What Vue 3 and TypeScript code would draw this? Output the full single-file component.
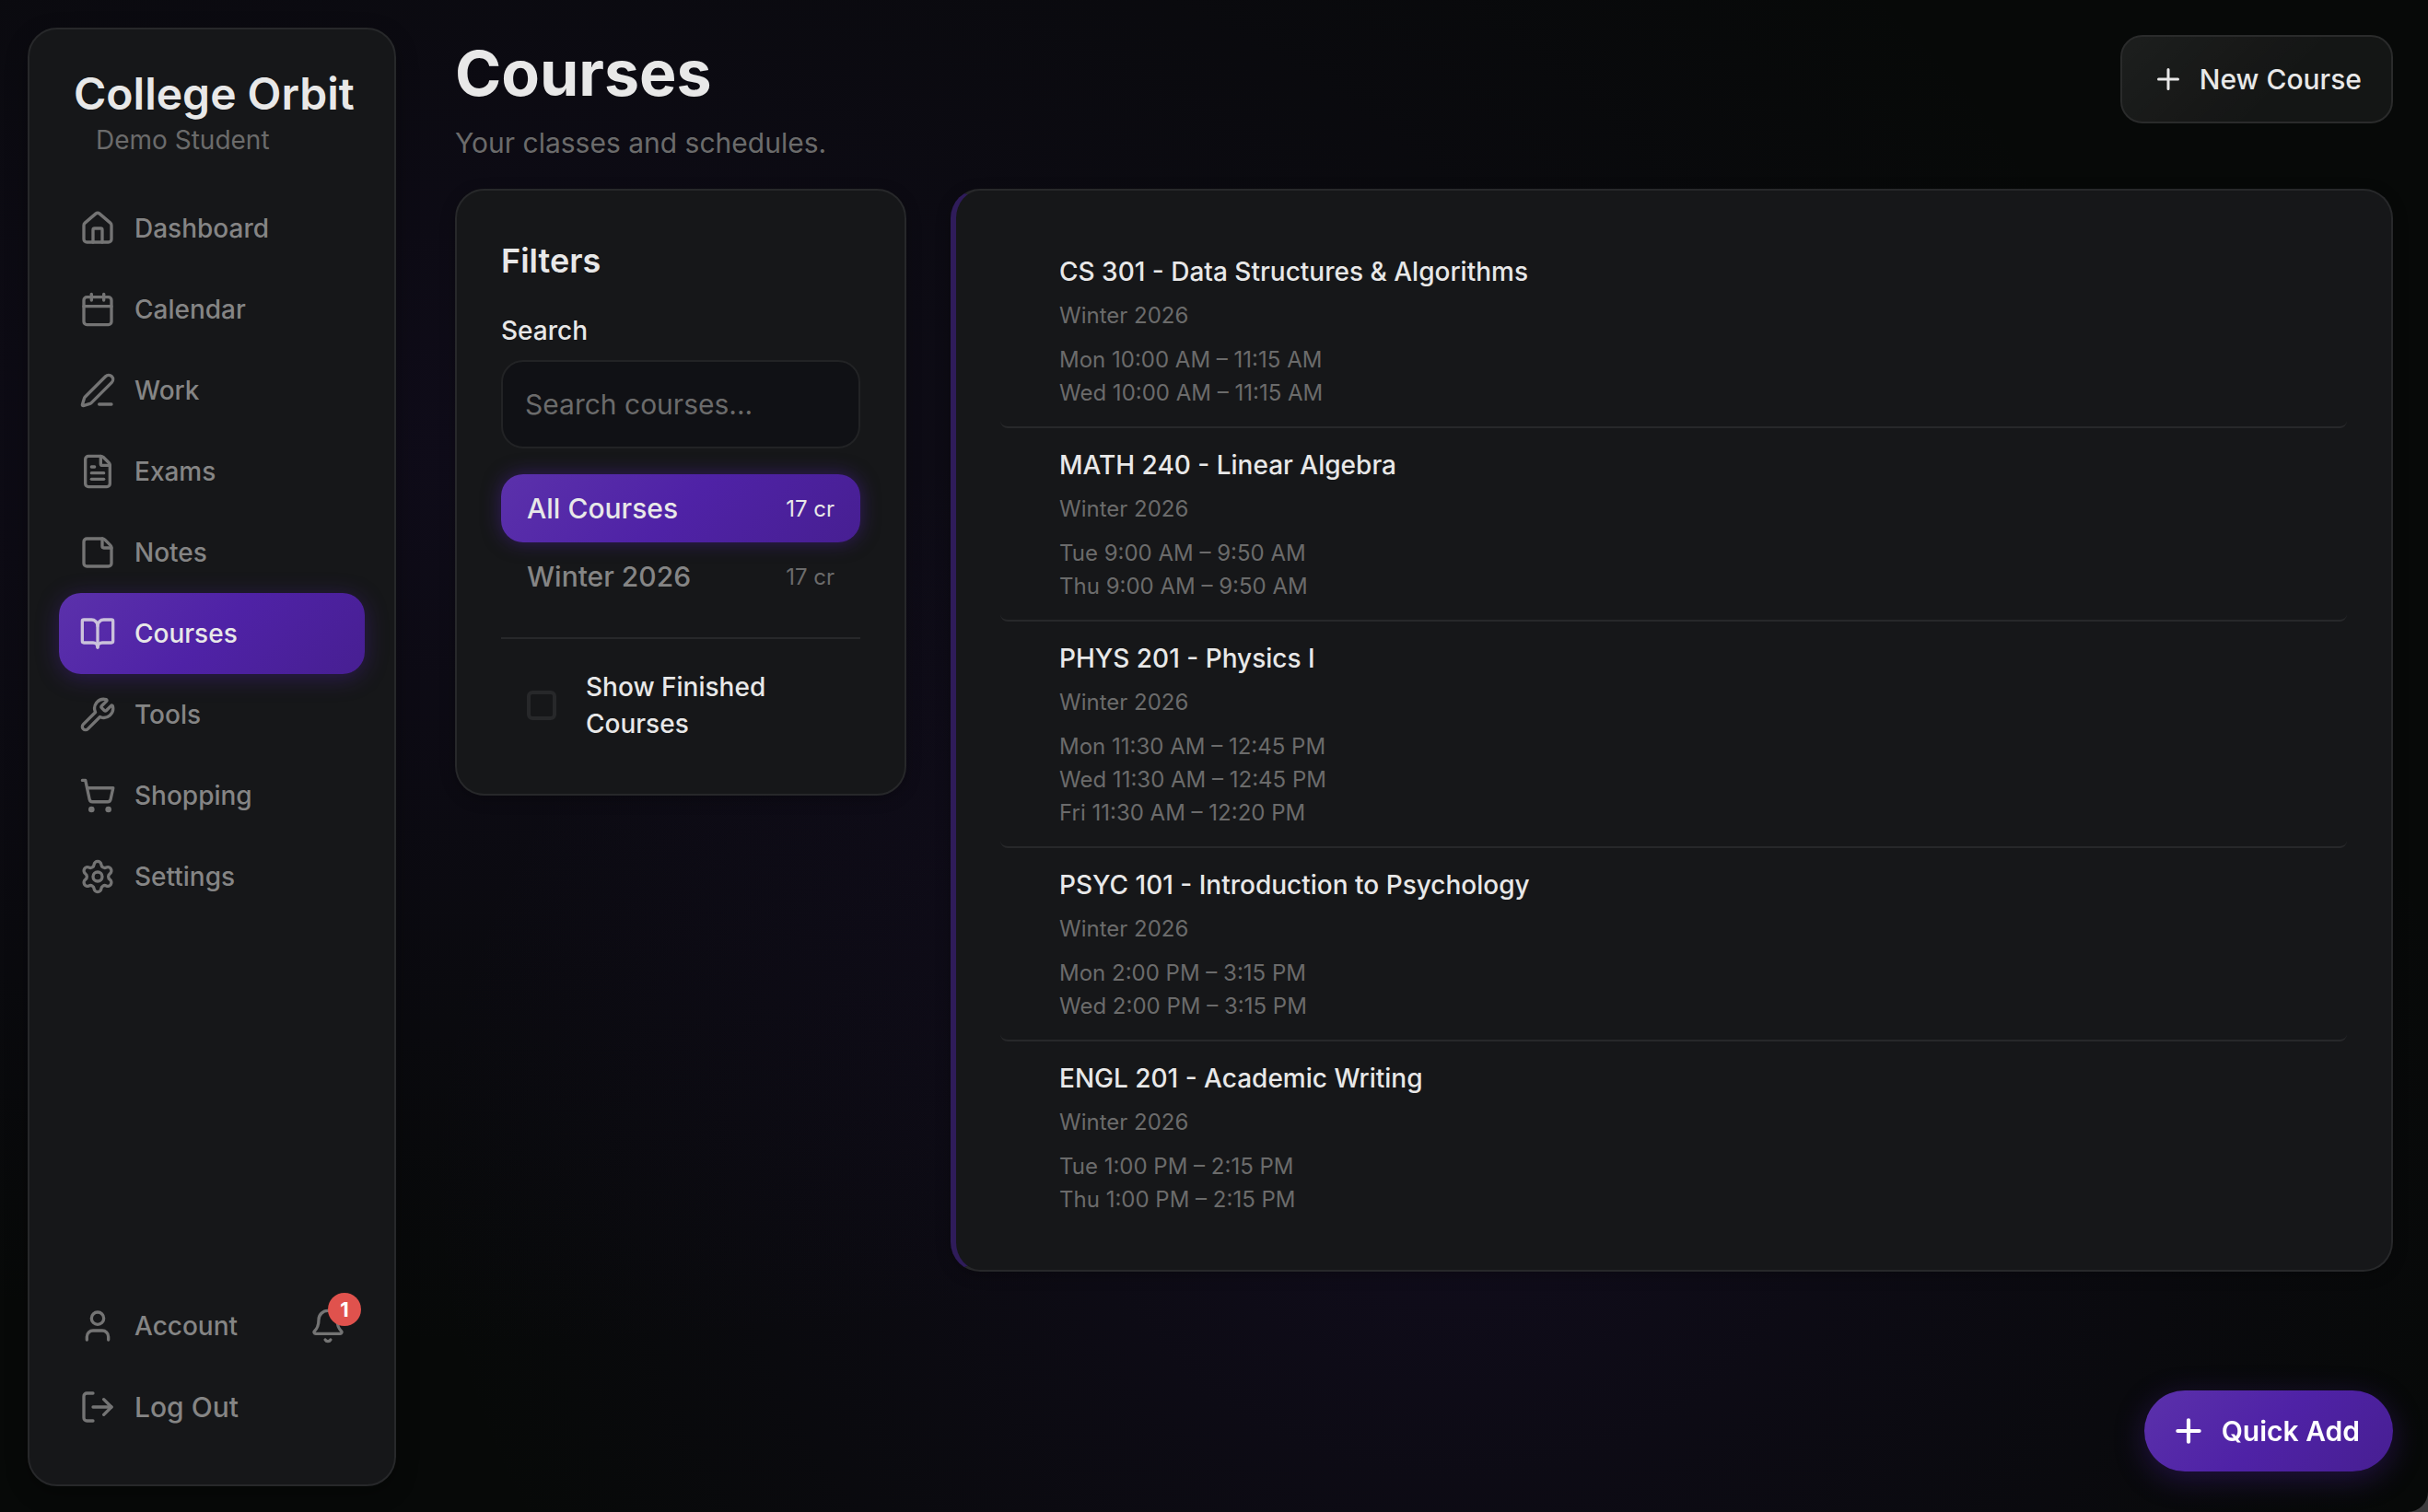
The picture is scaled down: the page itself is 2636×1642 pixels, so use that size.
<script setup lang="ts">
import { computed, ref } from 'vue'

interface NavItem {
  label: string
  icon: string[]
}

interface Course {
  code: string
  name: string
  term: string
  times: string[]
}

const icons: Record<string, string[]> = {
  home: [
    'M15 21v-8a1 1 0 0 0-1-1h-4a1 1 0 0 0-1 1v8',
    'M3 10a2 2 0 0 1 .709-1.528l7-5.999a2 2 0 0 1 2.582 0l7 5.999A2 2 0 0 1 21 10v9a2 2 0 0 1-2 2H5a2 2 0 0 1-2-2z',
  ],
  calendar: [
    'M8 2v4',
    'M16 2v4',
    'M5 4h14a2 2 0 0 1 2 2v14a2 2 0 0 1-2 2H5a2 2 0 0 1-2-2V6a2 2 0 0 1 2-2z',
    'M3 10h18',
  ],
  pen: [
    'M13 21h8',
    'M21.174 6.812a1 1 0 0 0-3.986-3.987L3.842 16.174a2 2 0 0 0-.5.83l-1.321 4.352a.5.5 0 0 0 .623.622l4.353-1.32a2 2 0 0 0 .83-.497z',
  ],
  file: [
    'M6 22a2 2 0 0 1-2-2V4a2 2 0 0 1 2-2h8a2.4 2.4 0 0 1 1.704.706l3.588 3.588A2.4 2.4 0 0 1 20 8v12a2 2 0 0 1-2 2z',
    'M14 2v5a1 1 0 0 0 1 1h5',
    'M10 9H8',
    'M16 13H8',
    'M16 17H8',
  ],
  note: [
    'M21 9a2.4 2.4 0 0 0-.706-1.706l-3.588-3.588A2.4 2.4 0 0 0 15 3H5a2 2 0 0 0-2 2v14a2 2 0 0 0 2 2h14a2 2 0 0 0 2-2z',
    'M15 3v5a1 1 0 0 0 1 1h5',
  ],
  book: [
    'M12 7v14',
    'M3 18a1 1 0 0 1-1-1V4a1 1 0 0 1 1-1h5a4 4 0 0 1 4 4 4 4 0 0 1 4-4h5a1 1 0 0 1 1 1v13a1 1 0 0 1-1 1h-6a3 3 0 0 0-3 3 3 3 0 0 0-3-3z',
  ],
  wrench: [
    'M14.7 6.3a1 1 0 0 0 0 1.4l1.6 1.6a1 1 0 0 0 1.4 0l3.106-3.105c.32-.322.863-.22.983.218a6 6 0 0 1-8.259 7.057l-7.91 7.91a1 1 0 0 1-2.999-3l7.91-7.91a6 6 0 0 1 7.057-8.259c.438.12.54.662.219.984z',
  ],
  cart: [
    'M7 21a1 1 0 1 0 2 0a1 1 0 1 0-2 0',
    'M18 21a1 1 0 1 0 2 0a1 1 0 1 0-2 0',
    'M2.05 2.05h2l2.66 12.42a2 2 0 0 0 2 1.58h9.78a2 2 0 0 0 1.95-1.57l1.65-7.43H5.12',
  ],
  gear: [
    'M9.671 4.136a2.34 2.34 0 0 1 4.659 0 2.34 2.34 0 0 0 3.319 1.915 2.34 2.34 0 0 1 2.33 4.033 2.34 2.34 0 0 0 0 3.831 2.34 2.34 0 0 1-2.33 4.033 2.34 2.34 0 0 0-3.319 1.915 2.34 2.34 0 0 1-4.659 0 2.34 2.34 0 0 0-3.32-1.915 2.34 2.34 0 0 1-2.33-4.033 2.34 2.34 0 0 0 0-3.831A2.34 2.34 0 0 1 6.35 6.051a2.34 2.34 0 0 0 3.319-1.915',
    'M9 12a3 3 0 1 0 6 0a3 3 0 1 0-6 0',
  ],
  user: ['M19 21v-2a4 4 0 0 0-4-4H9a4 4 0 0 0-4 4v2', 'M8 7a4 4 0 1 0 8 0a4 4 0 1 0-8 0'],
  bell: [
    'M10.268 21a2 2 0 0 0 3.464 0',
    'M3.262 15.326A1 1 0 0 0 4 17h16a1 1 0 0 0 .74-1.673C19.41 13.956 18 12.499 18 8A6 6 0 0 0 6 8c0 4.499-1.411 5.956-2.738 7.326',
  ],
  logout: ['m16 17 5-5-5-5', 'M21 12H9', 'M9 21H5a2 2 0 0 1-2-2V5a2 2 0 0 1 2-2h4'],
}

const navItems: NavItem[] = [
  { label: 'Dashboard', icon: icons.home },
  { label: 'Calendar', icon: icons.calendar },
  { label: 'Work', icon: icons.pen },
  { label: 'Exams', icon: icons.file },
  { label: 'Notes', icon: icons.note },
  { label: 'Courses', icon: icons.book },
  { label: 'Tools', icon: icons.wrench },
  { label: 'Shopping', icon: icons.cart },
  { label: 'Settings', icon: icons.gear },
]
const activePage = ref('Courses')

const terms = [
  { label: 'All Courses', credits: 17 },
  { label: 'Winter 2026', credits: 17 },
]
const activeTerm = ref('All Courses')
const search = ref('')
const showFinished = ref(false)

const courses: Course[] = [
  {
    code: 'CS 301',
    name: 'Data Structures & Algorithms',
    term: 'Winter 2026',
    times: ['Mon 10:00 AM – 11:15 AM', 'Wed 10:00 AM – 11:15 AM'],
  },
  {
    code: 'MATH 240',
    name: 'Linear Algebra',
    term: 'Winter 2026',
    times: ['Tue 9:00 AM – 9:50 AM', 'Thu 9:00 AM – 9:50 AM'],
  },
  {
    code: 'PHYS 201',
    name: 'Physics I',
    term: 'Winter 2026',
    times: ['Mon 11:30 AM – 12:45 PM', 'Wed 11:30 AM – 12:45 PM', 'Fri 11:30 AM – 12:20 PM'],
  },
  {
    code: 'PSYC 101',
    name: 'Introduction to Psychology',
    term: 'Winter 2026',
    times: ['Mon 2:00 PM – 3:15 PM', 'Wed 2:00 PM – 3:15 PM'],
  },
  {
    code: 'ENGL 201',
    name: 'Academic Writing',
    term: 'Winter 2026',
    times: ['Tue 1:00 PM – 2:15 PM', 'Thu 1:00 PM – 2:15 PM'],
  },
]

const visibleCourses = computed(() => {
  const query = search.value.trim().toLowerCase()
  return courses.filter(
    (c) =>
      (activeTerm.value === 'All Courses' || c.term === activeTerm.value) &&
      `${c.code} ${c.name}`.toLowerCase().includes(query),
  )
})
</script>

<template>
  <div class="app">
    <aside class="sidebar">
      <div class="brand">
        <div class="brand-name">College Orbit</div>
        <div class="brand-user">Demo Student</div>
      </div>
      <nav class="nav" aria-label="Main">
        <a
          v-for="item in navItems"
          :key="item.label"
          href="#"
          class="nav-item"
          :class="{ active: item.label === activePage }"
          @click.prevent="activePage = item.label"
        >
          <svg class="icon" viewBox="0 0 24 24" aria-hidden="true">
            <path v-for="d in item.icon" :key="d" :d="d" />
          </svg>
          <span>{{ item.label }}</span>
        </a>
      </nav>
      <div class="nav nav-bottom">
        <div class="account-row">
          <a href="#" class="nav-item" @click.prevent>
            <svg class="icon" viewBox="0 0 24 24" aria-hidden="true">
              <path v-for="d in icons.user" :key="d" :d="d" />
            </svg>
            <span>Account</span>
          </a>
          <button type="button" class="bell" aria-label="Notifications">
            <svg class="icon" viewBox="0 0 24 24" aria-hidden="true">
              <path v-for="d in icons.bell" :key="d" :d="d" />
            </svg>
            <span class="badge">1</span>
          </button>
        </div>
        <button type="button" class="nav-item logout">
          <svg class="icon" viewBox="0 0 24 24" aria-hidden="true">
            <path v-for="d in icons.logout" :key="d" :d="d" />
          </svg>
          <span>Log Out</span>
        </button>
      </div>
    </aside>

    <main class="main">
      <header class="header">
        <div>
          <h1>Courses</h1>
          <p class="subtitle">Your classes and schedules.</p>
        </div>
        <button type="button" class="new-course">
          <svg class="plus" viewBox="0 0 24 24" aria-hidden="true"><path d="M5 12h14M12 5v14" /></svg>
          <span>New Course</span>
        </button>
      </header>

      <div class="columns">
        <section class="card filters">
          <h2>Filters</h2>
          <label class="search-label" for="course-search">Search</label>
          <input
            id="course-search"
            v-model="search"
            class="search"
            type="text"
            placeholder="Search courses..."
          />
          <div class="terms">
            <button
              v-for="term in terms"
              :key="term.label"
              type="button"
              class="term"
              :class="{ active: term.label === activeTerm }"
              @click="activeTerm = term.label"
            >
              <span>{{ term.label }}</span>
              <span class="credits">{{ term.credits }} cr</span>
            </button>
          </div>
          <div class="finished">
            <input id="show-finished" v-model="showFinished" type="checkbox" class="checkbox" />
            <label for="show-finished">Show Finished Courses</label>
          </div>
        </section>

        <section class="card list">
          <article v-for="course in visibleCourses" :key="course.code" class="course">
            <h3>{{ course.code }} - {{ course.name }}</h3>
            <div class="course-term">{{ course.term }}</div>
            <div v-for="time in course.times" :key="time" class="course-time">{{ time }}</div>
          </article>
        </section>
      </div>
    </main>

    <button type="button" class="quick-add">
      <svg class="icon" viewBox="0 0 24 24" aria-hidden="true"><path d="M5 12h14M12 5v14" /></svg>
      <span>Quick Add</span>
    </button>
  </div>
</template>

<style>
html {
  background: #3c3b3d;
}
body {
  margin: 0;
}
</style>

<style scoped>
.app {
  --card: #161719;
  --line: #27282a;
  --text: #e8e8e8;
  --soft: #858585;
  --muted: #6b6b6b;
  --accent: linear-gradient(135deg, #5b31ab 0%, #4f22a6 50%, #471f92 100%);
  box-sizing: border-box;
  display: flex;
  gap: 64px;
  min-height: 100vh;
  padding: 30px 38px 28px 30px;
  border-bottom-right-radius: 22px;
  background:
    radial-gradient(ellipse at 20% 30%, rgba(74, 32, 150, 0.12) 0%, transparent 60%),
    radial-gradient(ellipse at 60% 78%, rgba(74, 32, 150, 0.14) 0%, transparent 50%),
    #070908;
  color: var(--text);
  font-family: Inter, 'Liberation Sans', sans-serif;
  font-size: 28px;
}

.app *,
.app *::before {
  box-sizing: border-box;
}

button,
input {
  font-family: inherit;
  margin: 0;
}

button {
  border: 0;
  background: none;
  cursor: pointer;
}

.icon,
.plus {
  flex: none;
  width: 40px;
  height: 40px;
  fill: none;
  stroke: currentColor;
  stroke-width: 2;
  stroke-linecap: round;
  stroke-linejoin: round;
}

.sidebar {
  display: flex;
  flex-direction: column;
  flex: none;
  width: 400px;
  padding: 40px 32px;
  border: 2px solid var(--line);
  border-radius: 32px;
  background: var(--card);
  box-shadow: 0 8px 24px rgba(0, 0, 0, 0.3);
}

.brand {
  padding: 0 16px;
  margin-bottom: 32px;
  white-space: nowrap;
}

.brand-name {
  font-size: 48px;
  font-weight: 600;
  line-height: 60px;
}

.brand-user {
  padding-left: 24px;
  color: var(--muted);
  line-height: 40px;
}

.nav {
  display: flex;
  flex-direction: column;
}

.nav-bottom {
  margin-top: auto;
}

.nav-item {
  display: flex;
  align-items: center;
  gap: 20px;
  flex: none;
  height: 88px;
  padding: 0 22px;
  border-radius: 24px;
  color: var(--soft);
  font-size: 28px;
  font-weight: 500;
  text-decoration: none;
}

.nav-item .icon,
.bell .icon {
  opacity: 0.85;
}

.nav-item.active {
  background: var(--accent);
  box-shadow: 0 4px 24px rgba(79, 34, 166, 0.4);
  color: var(--text);
}

.nav-item.active .icon {
  opacity: 0.8;
}

.nav-item.logout {
  font-size: 30px;
}

.account-row {
  display: flex;
  align-items: center;
  justify-content: space-between;
}

.bell {
  position: relative;
  display: flex;
  padding: 20px;
  color: var(--soft);
}

.badge {
  position: absolute;
  top: 4px;
  right: 4px;
  width: 36px;
  height: 36px;
  border-radius: 50%;
  background: #e0524d;
  color: #fff;
  font-size: 22px;
  font-weight: 700;
  line-height: 36px;
  text-align: center;
}

.main {
  flex: 1;
  min-width: 0;
  padding-top: 8px;
}

.header {
  display: flex;
  align-items: flex-start;
  justify-content: space-between;
  margin-bottom: 27px;
}

h1,
h2,
h3,
p {
  margin: 0;
}

h1 {
  font-size: 68px;
  font-weight: 700;
  line-height: 82px;
}

.subtitle {
  margin-top: 12px;
  color: var(--muted);
  font-size: 30px;
  line-height: 46px;
}

.new-course {
  display: flex;
  align-items: center;
  gap: 16px;
  height: 96px;
  padding: 0 32px;
  border: 2px solid #2a2b2b;
  border-radius: 24px;
  background: linear-gradient(135deg, rgba(255, 255, 255, 0.09) 0%, rgba(255, 255, 255, 0.05) 60%);
  color: var(--text);
  font-size: 30px;
  font-weight: 500;
}

.plus {
  width: 36px;
  height: 36px;
}

.columns {
  display: flex;
  align-items: flex-start;
  gap: 48px;
}

.card {
  padding: 48px;
  border: 2px solid var(--line);
  border-radius: 32px;
  background: var(--card);
  box-shadow: 0 4px 16px rgba(0, 0, 0, 0.25);
}

.filters {
  flex: none;
  width: 490px;
}

h2 {
  margin-bottom: 28px;
  font-size: 36px;
  font-weight: 600;
  line-height: 56px;
}

.search-label {
  display: block;
  margin-bottom: 12px;
  font-weight: 500;
  line-height: 40px;
}

.search {
  display: block;
  width: 100%;
  height: 96px;
  padding: 0 24px;
  border: 2px solid #222325;
  border-radius: 24px;
  outline: 0;
  background: #101115;
  color: var(--text);
  font-size: 30px;
}

.search::placeholder {
  color: var(--muted);
  opacity: 1;
}

.terms {
  display: flex;
  flex-direction: column;
  margin-top: 28px;
}

.term {
  display: flex;
  align-items: center;
  justify-content: space-between;
  height: 74px;
  padding: 0 28px;
  border-radius: 24px;
  color: var(--soft);
  font-size: 30px;
  font-weight: 500;
}

.term.active {
  background: var(--accent);
  box-shadow: 0 0 20px rgba(79, 34, 166, 0.5);
  color: var(--text);
}

.credits {
  color: var(--muted);
  font-size: 24px;
  font-weight: 400;
}

.term.active .credits {
  color: var(--text);
}

.finished {
  display: flex;
  align-items: center;
  gap: 32px;
  margin-top: 29px;
  padding: 32px 28px 8px;
  border-top: 2px solid var(--line);
  font-weight: 500;
  line-height: 40px;
}

.checkbox {
  appearance: none;
  flex: none;
  width: 32px;
  height: 32px;
  border: 4px solid var(--line);
  border-radius: 6px;
}

.checkbox:checked {
  background: #4f22a6;
}

.list {
  flex: 1;
  min-width: 0;
  border-left: 6px solid #2f1c5a;
}

.course {
  padding: 20px 64px 18px;
  border-bottom: 2px solid var(--line);
  border-radius: 8px;
  color: var(--muted);
  font-size: 24px;
  line-height: 36px;
}

.course:last-child {
  padding-bottom: 10px;
  border-bottom: 0;
}

h3 {
  color: var(--text);
  font-size: 28px;
  font-weight: 500;
  line-height: 40px;
}

.course-term {
  margin: 10px 0 12px;
}

.quick-add {
  position: fixed;
  right: 38px;
  bottom: 44px;
  display: flex;
  align-items: center;
  gap: 16px;
  height: 88px;
  padding: 0 36px 0 28px;
  border-radius: 44px;
  background: var(--accent);
  box-shadow: 0 8px 32px rgba(79, 34, 166, 0.35);
  color: #fff;
  font-size: 30px;
  font-weight: 600;
}

.quick-add .icon {
  stroke-width: 2.5;
}
</style>
